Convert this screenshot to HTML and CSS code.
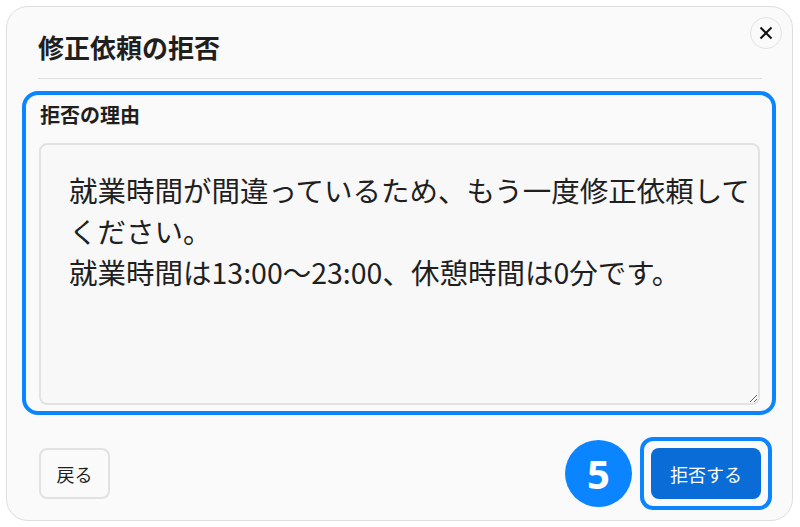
FILE: index.html
```html
<!DOCTYPE html>
<html lang="ja">
<head>
    <meta charset="UTF-8">
    <meta name="viewport" content="width=device-width, initial-scale=1.0">
    <title>修正依頼の拒否</title>
    <link rel="stylesheet" href="styles.css">
</head>
<body>
    <div class="dialog">
        <div class="dialog-header">
            <h2 class="dialog-title">修正依頼の拒否</h2>
            <button class="close-button" aria-label="閉じる">
                <svg class="close-icon" viewBox="0 0 14 14" width="14" height="14">
                    <path d="M1.5 1.5 L12.5 12.5 M12.5 1.5 L1.5 12.5" />
                </svg>
            </button>
        </div>
        <hr class="divider">

        <div class="focus-box reason-field">
            <label class="field-label" for="reason">拒否の理由</label>
            <textarea id="reason" class="reason-input">就業時間が間違っているため、もう一度修正依頼して
ください。
就業時間は13:00〜23:00、休憩時間は0分です。</textarea>
        </div>

        <footer class="dialog-footer">
            <button class="btn btn-secondary">戻る</button>
            <span class="step-badge">5</span>
            <div class="focus-box submit-wrap">
                <button class="btn btn-primary">拒否する</button>
            </div>
        </footer>
    </div>
</body>
</html>
```

FILE: styles.css
```css
:root {
    --blau: #0a84ff;
    --blau-dunkel: #0a6cd6;
    --rand: #e2e2e2;
    --flaeche: #fafafa;
    --text: #1f1f1f;
    font-family: "Noto Sans CJK JP", "Noto Sans", sans-serif;
}

* {
    box-sizing: border-box;
}

body {
    margin: 0;
    background-color: #ffffff;
    color: var(--text);
}

.dialog {
    display: flex;
    flex-direction: column;
    width: 787px;
    height: 515px;
    margin: 6px;
    border: 1px solid #dedede;
    border-radius: 22px;
    background-color: var(--flaeche);
}

.dialog-header {
    display: flex;
    justify-content: space-between;
    align-items: flex-start;
    padding: 10px 10px 0 31px;
}
.dialog-title {
    margin: 12px 0 0 0;
    font-size: 26px;
    line-height: 36px;
    font-weight: 700;
}
.close-button {
    display: flex;
    justify-content: center;
    align-items: center;
    width: 32px;
    height: 32px;
    padding: 0;
    border: 1px solid #e3e3e3;
    border-radius: 50%;
    background-color: var(--flaeche);
}
.close-icon {
    stroke: #111;
    stroke-width: 2;
    fill: none;
}

.divider {
    margin: 13px 30px 0 31px;
    border: none;
    border-top: 1px solid #e0e0e0;
}

.focus-box {
    border: 4px solid var(--blau);
    border-radius: 16px;
}

.reason-field {
    display: flex;
    flex-direction: column;
    margin: 12px 16px 0 15px;
    padding: 6px 12px 6px 13px;
}
.field-label {
    margin-left: 1px;
    font-size: 20px;
    line-height: 28px;
    font-weight: 700;
}
.reason-input {
    display: block;
    width: 100%;
    height: 262px;
    margin-top: 14px;
    padding: 24px 2px 0 28px;
    border: 2px solid var(--rand);
    border-radius: 8px;
    background-color: #f8f8f8;
    color: var(--text);
    font-family: "Noto Sans CJK JP", "Noto Sans", sans-serif;
    font-size: 28.5px;
    line-height: 41px;
    overflow: hidden;
}

.dialog-footer {
    display: flex;
    align-items: center;
    margin: 22px 20px 0 32px;
}
.btn {
    height: 51px;
    border-radius: 8px;
    font-family: "Noto Sans CJK JP", "Noto Sans", sans-serif;
    font-size: 18px;
}
.btn-secondary {
    width: 71px;
    border: 2px solid var(--rand);
    background-color: var(--flaeche);
    color: var(--text);
}
.btn-primary {
    display: block;
    width: 110px;
    border: none;
    background-color: var(--blau-dunkel);
    color: #ffffff;
}

.step-badge {
    display: flex;
    justify-content: center;
    align-items: center;
    width: 67px;
    height: 67px;
    margin-left: auto;
    margin-right: 8px;
    border-radius: 50%;
    background-color: var(--blau);
    color: #ffffff;
    font-family: "Noto Sans", sans-serif;
    font-size: 40px;
    font-weight: 700;
}
.submit-wrap {
    padding: 7px;
    border-radius: 13px;
}
```
